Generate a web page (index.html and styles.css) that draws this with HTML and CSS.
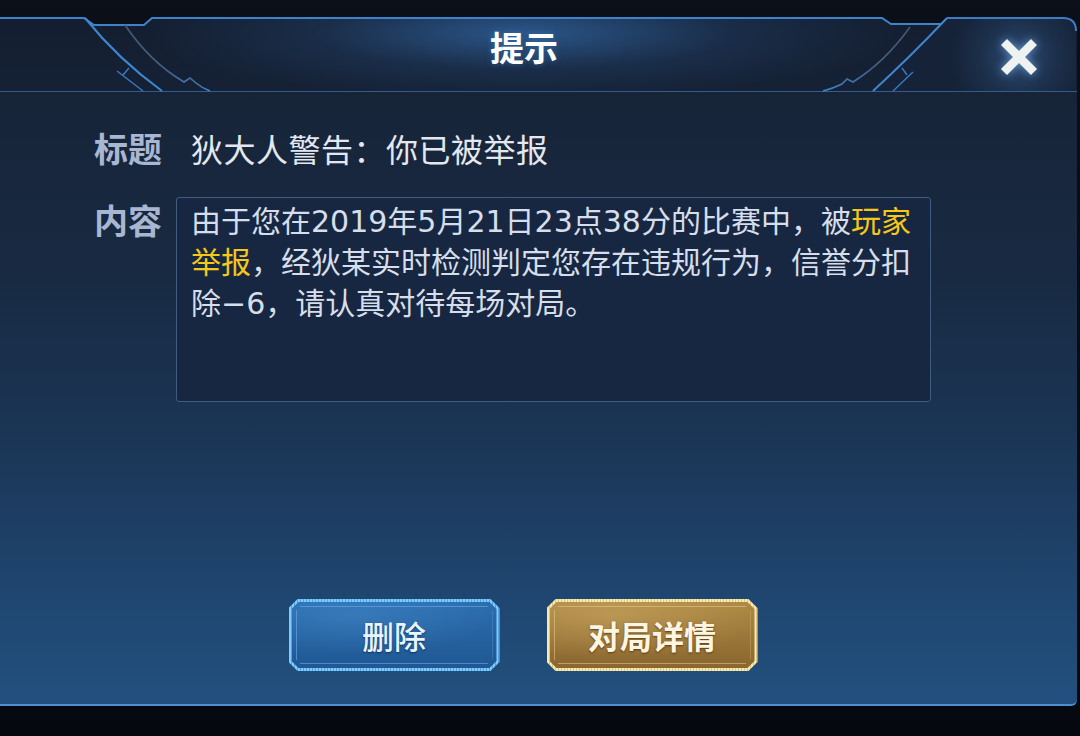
FILE: index.html
```html
<!DOCTYPE html>
<html lang="zh-CN">
<head>
<meta charset="utf-8">
<title>提示</title>
<link rel="stylesheet" href="styles.css">
</head>
<body>
<div class="screen">
  <section class="dialog">
    <header class="dialog-head">
      <svg class="head-frame" viewBox="0 0 1080 75" width="1080" height="75" aria-hidden="true">
        <defs>
          <radialGradient id="tabGlow" cx="1019" cy="40" r="70" gradientUnits="userSpaceOnUse">
            <stop offset="0" stop-color="#2b4a72"/>
            <stop offset="0.55" stop-color="#1c2f4a"/>
            <stop offset="1" stop-color="#152237"/>
          </radialGradient>
          <linearGradient id="innerLine" x1="0" y1="0" x2="0" y2="75" gradientUnits="userSpaceOnUse">
            <stop offset="0" stop-color="#46566e"/>
            <stop offset="0.7" stop-color="#465f82"/>
            <stop offset="1" stop-color="#3f86cf"/>
          </linearGradient>
        </defs>
        <!-- right tab behind the close button -->
        <path d="M947 1 H1063 Q1076 1 1076 14 V74 H873 Q910 40 947 1 Z" fill="url(#tabGlow)"/>
        <!-- notches cut into the top edge -->
        <path d="M84 0 L94 8 H144 L152 0 Z" fill="#0a0f18"/>
        <path d="M882 0 L891 7 H941 L947 0 Z" fill="#0a0f18"/>
        <!-- top edge -->
        <path d="M0 1 H84 L94 8 H144 L152 1 H882 L891 7 H941" fill="none" stroke="#3d83cc" stroke-width="2"/>
        <path d="M947 1 H1063 Q1076 1 1076 14" fill="none" stroke="#3b7cc2" stroke-width="2"/>
        <!-- left ornament -->
        <path d="M85 1 Q118 42 162 74" fill="none" stroke="#3f86d0" stroke-width="2"/>
        <path d="M125 8 Q150 45 184 65 L190 61 L196 66 Q202 71 210 74" fill="none" stroke="url(#innerLine)" stroke-width="1.6"/>
        <path d="M117 54 L143 74 M123 58 L129 51" fill="none" stroke="#3a78bb" stroke-width="1.5"/>
        <!-- right ornament -->
        <path d="M947 1 Q910 40 873 74" fill="none" stroke="#3f86d0" stroke-width="2"/>
        <path d="M910 10 Q885 45 853 65 L847 62 L842 67 Q834 71 823 74" fill="none" stroke="url(#innerLine)" stroke-width="1.6"/>
        <path d="M913 55 L893 74 M907 58 L902 51" fill="none" stroke="#3a78bb" stroke-width="1.5"/>
      </svg>
      <h1 class="dialog-title">提示</h1>
      <button class="close-btn" type="button" aria-label="关闭">
        <svg viewBox="0 0 40 40" width="40" height="40">
          <path d="M5 5 L35 35 M35 5 L5 35" stroke="#eef3f2" stroke-width="8.5" fill="none"/>
        </svg>
      </button>
    </header>

    <div class="dialog-body">
      <div class="field-row">
        <span class="field-label">标题</span>
        <span class="field-value">狄大人警告：你已被举报</span>
      </div>
      <div class="field-row content-row">
        <span class="field-label">内容</span>
        <div class="content-box">由于您在2019年5月21日23点38分的比赛中，被<span class="hl">玩家举报</span>，经狄某实时检测判定您存在违规行为，信誉分扣除−6，请认真对待每场对局。</div>
      </div>
      <div class="actions">
        <button class="btn btn-blue" type="button"><span class="btn-face">删除</span></button>
        <button class="btn btn-gold" type="button"><span class="btn-face">对局详情</span></button>
      </div>
    </div>
  </section>
</div>
</body>
</html>
```

FILE: styles.css
```css
* {
  box-sizing: border-box;
}

html,
body {
  margin: 0;
  padding: 0;
}

body {
  background: #070b12;
  font-family: "Noto Sans CJK SC", sans-serif;
}

.screen {
  width: 1080px;
  height: 736px;
  padding-top: 17px;
  background: linear-gradient(180deg, #0b1019 0px, #0a0f18 17px, #060910 706px, #05080d 100%);
  overflow: hidden;
}

.dialog {
  width: 1077px;
  height: 689px;
  display: flex;
  flex-direction: column;
}

/* ---------- header ---------- */
.dialog-head {
  position: relative;
  height: 75px;
  flex: none;
  display: flex;
  justify-content: center;
  align-items: flex-start;
  padding: 9px 29px 0 0;
  border-top-right-radius: 14px;
  border-bottom: 1px solid #2f5d8f;
  background:
    radial-gradient(ellipse 380px 66px at 524px 16px, rgba(50, 104, 166, 0.75), rgba(40, 80, 130, 0.28) 55%, rgba(20, 30, 48, 0) 100%),
    linear-gradient(180deg, #141e30, #152135);
}

.head-frame {
  position: absolute;
  left: 0;
  top: 0;
  overflow: visible;
}

.dialog-title {
  position: relative;
  margin: 0;
  font-size: 34px;
  line-height: 42px;
  font-weight: 700;
  color: #ffffff;
  text-shadow: 0 0 6px rgba(90, 160, 230, 0.35);
}

.close-btn {
  position: absolute;
  right: 38px;
  top: 20px;
  width: 40px;
  height: 40px;
  padding: 0;
  border: 0;
  background: none;
  filter: drop-shadow(0 0 5px rgba(140, 195, 255, 0.65));
}

.close-btn svg {
  display: block;
}

/* ---------- body ---------- */
.dialog-body {
  flex: 1;
  display: flex;
  flex-direction: column;
  padding: 35px 0 33px 0;
  border-bottom: 2px solid #4b90d4;
  border-bottom-right-radius: 6px;
  background: linear-gradient(180deg, #172438 0%, #182a42 30%, #1b3657 58%, #1f4670 82%, #22507e 100%);
}

.field-row {
  display: grid;
  grid-template-columns: 82px 1fr;
  padding-left: 94px;
  align-items: start;
}

.field-label {
  font-size: 34px;
  line-height: 42px;
  font-weight: 700;
  color: #a8b6d2;
}

.field-value {
  padding-left: 15px;
  font-size: 32px;
  line-height: 42px;
  letter-spacing: 0.5px;
  color: #e3e8f0;
}

.content-row {
  margin-top: 28px;
}

.content-row .field-label {
  margin-top: 2px;
}

.content-box {
  width: 755px;
  height: 205px;
  padding: 3px 8px 0 14px;
  border: 1px solid #3f5b80;
  border-radius: 3px;
  background: #182741;
  font-family: "DejaVu Sans", "Noto Sans CJK SC", sans-serif;
  font-size: 30px;
  line-height: 41px;
  color: #d5deea;
}

.hl {
  color: #f4c81a;
}

/* ---------- buttons ---------- */
.actions {
  margin-top: auto;
  display: flex;
  justify-content: center;
  gap: 47px;
  padding-right: 31px;
}

.btn {
  width: 211px;
  height: 72px;
  padding: 3px;
  border: 0;
  font-family: "Noto Sans CJK SC", sans-serif;
  clip-path: polygon(9px 0, calc(100% - 9px) 0, 100% 9px, 100% calc(100% - 9px), calc(100% - 9px) 100%, 9px 100%, 0 calc(100% - 9px), 0 9px);
}

.btn-face {
  position: relative;
  display: flex;
  align-items: center;
  justify-content: center;
  height: 100%;
  font-size: 32px;
  line-height: 1;
  clip-path: polygon(7px 0, calc(100% - 7px) 0, 100% 7px, 100% calc(100% - 7px), calc(100% - 7px) 100%, 7px 100%, 0 calc(100% - 7px), 0 7px);
}

.btn-face::before {
  content: "";
  position: absolute;
  inset: 4px;
  border: 1px solid;
  clip-path: polygon(5px 0, calc(100% - 5px) 0, 100% 5px, 100% calc(100% - 5px), calc(100% - 5px) 100%, 5px 100%, 0 calc(100% - 5px), 0 5px);
}

.btn-blue {
  background: repeating-linear-gradient(90deg, #7fcaff 0 2px, #4fa3e6 2px 3px);
}

.btn-blue .btn-face {
  color: #e9f4ff;
  font-weight: 500;
  text-shadow: 0 1px 2px rgba(0, 25, 70, 0.7);
  background:
    radial-gradient(ellipse 140px 40px at 30% 20%, rgba(80, 150, 215, 0.35), rgba(80, 150, 215, 0) 100%),
    linear-gradient(180deg, #2c6eae 0%, #2662a1 50%, #1f5893 100%);
}

.btn-blue .btn-face::before {
  border-color: rgba(110, 180, 240, 0.55);
}

.btn-gold {
  background: repeating-linear-gradient(90deg, #f7e9b2 0 2px, #dfc683 2px 3px);
}

.btn-gold .btn-face {
  color: #fff6e2;
  font-weight: 700;
  text-shadow: 0 1px 2px rgba(60, 35, 0, 0.7);
  background:
    radial-gradient(ellipse 150px 42px at 30% 20%, rgba(210, 175, 105, 0.45), rgba(210, 175, 105, 0) 100%),
    linear-gradient(180deg, #ad8944 0%, #9b773a 50%, #8a672f 100%);
}

.btn-gold .btn-face::before {
  border-color: rgba(230, 205, 135, 0.55);
}
```
